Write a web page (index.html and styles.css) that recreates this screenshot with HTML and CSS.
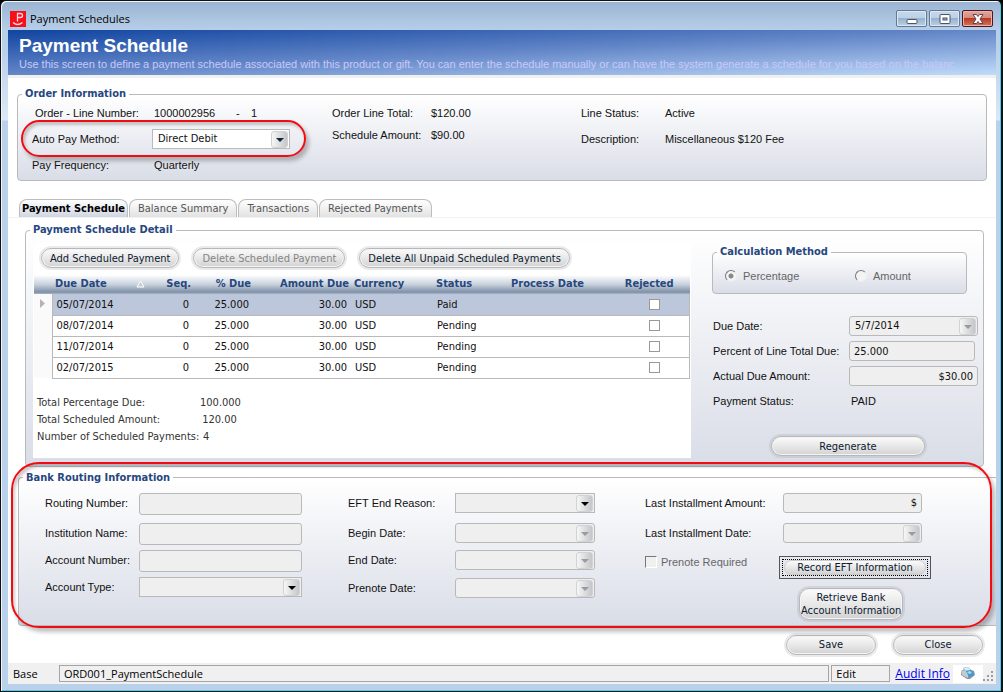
FILE: index.html
```html
<!DOCTYPE html>
<html lang="en">
<head>
<meta charset="utf-8">
<title>Payment Schedules</title>
<link rel="stylesheet" href="styles.css">
</head>
<body>
<div class="window">
  <div class="titlebar">
    <svg class="app-icon" width="16" height="16" viewBox="0 0 16 16" aria-hidden="true">
      <rect width="16" height="16" fill="#f5101c"/>
      <path d="M7.500 10.500V2.500H10.500Q12.500 2.500 12.500 4.500T10.500 6.500H7.500" fill="none" stroke="#ffd9d9" stroke-width="1.300"/>
      <path d="M3 11.500Q7.500 15.500 12.500 11.500" fill="none" stroke="#ffd9d9" stroke-width="1.300"/>
    </svg>
    <span class="caption">Payment Schedules</span>
    <div class="window-buttons">
      <button class="win-btn" aria-label="Minimize"><svg width="12" height="12" viewBox="0 0 12 12"><rect x="1" y="6.500" width="10" height="4" rx="1" fill="#fff" stroke="#4b5468"/></svg></button>
      <button class="win-btn" aria-label="Maximize"><svg width="12" height="12" viewBox="0 0 12 12"><rect x="1" y="1.500" width="10" height="9" rx="1" fill="#fff" stroke="#4b5468"/><rect x="4" y="5" width="4" height="2" fill="#9fb8d6" stroke="#4b5468"/></svg></button>
      <button class="win-btn win-close" aria-label="Close window"><svg width="12" height="12" viewBox="0 0 12 12"><path d="M1 1.500H4.500L6 3.500 7.500 1.500H11L8 6 11 10.500H7.500L6 8.500 4.500 10.500H1L4 6Z" fill="#fff" stroke="#5a4453" stroke-width="1"/></svg></button>
    </div>
  </div>

  <main class="client">
    <header class="banner">
      <h1>Payment Schedule</h1>
      <p>Use this screen to define a payment schedule associated with this product or gift. You can enter the schedule manually or can have the system generate a schedule for you based on the balanc</p>
    </header>

    <fieldset class="group order">
      <legend>Order Information</legend>
      <div class="order-grid">
        <div class="order-col col-a">
          <div class="pair first"><span>Order - Line Number:</span><span class="line-no"><span>1000002956</span><span>-</span><span>1</span></span></div>
          <div class="pair marked">
            <label for="autopay">Auto Pay Method:</label>
            <span class="combo live"><select id="autopay"><option>Direct Debit</option></select><i class="arrow"></i></span>
            <span class="marker marker-small"></span>
          </div>
          <div class="pair"><span>Pay Frequency:</span><span>Quarterly</span></div>
        </div>
        <div class="order-col col-b">
          <div class="pair"><span>Order Line Total:</span><span>$120.00</span></div>
          <div class="pair"><span>Schedule Amount:</span><span>$90.00</span></div>
        </div>
        <div class="order-col col-c">
          <div class="pair"><span>Line Status:</span><span>Active</span></div>
          <div class="pair"><span>Description:</span><span>Miscellaneous $120 Fee</span></div>
        </div>
      </div>
    </fieldset>

    <div class="tabs" role="tablist">
      <button class="tab active" role="tab" aria-selected="true">Payment Schedule</button>
      <button class="tab" role="tab">Balance Summary</button>
      <button class="tab" role="tab">Transactions</button>
      <button class="tab" role="tab">Rejected Payments</button>
    </div>

    <section class="tab-page">
      <fieldset class="group detail">
        <legend>Payment Schedule Detail</legend>
        <div class="detail-grid">
          <div class="schedule">
            <div class="actions">
              <button class="pill">Add Scheduled Payment</button>
              <button class="pill" disabled>Delete Scheduled Payment</button>
              <button class="pill">Delete All Unpaid Scheduled Payments</button>
            </div>
            <table class="rows">
              <colgroup><col class="c-sel"><col class="c-date"><col class="c-seq"><col class="c-pct"><col class="c-amt"><col class="c-cur"><col class="c-stat"><col class="c-proc"><col class="c-rej"></colgroup>
              <thead>
                <tr><th></th><th><span class="sorted">Due Date<svg width="9" height="8" viewBox="0 0 9 8" aria-hidden="true"><path d="M4.500 1L8 7H1Z" fill="#c6ccd4" stroke="#fff"/></svg></span></th><th class="num">Seq.</th><th class="num">% Due</th><th class="num">Amount Due</th><th>Currency</th><th>Status</th><th>Process Date</th><th class="mid">Rejected</th></tr>
              </thead>
              <tbody>
                <tr class="current"><td class="sel"><svg width="6" height="9" viewBox="0 0 6 9" aria-hidden="true"><path d="M0 0L5 4.500 0 9Z" fill="#b4b4b4"/></svg></td><td>05/07/2014</td><td class="num">0</td><td class="num">25.000</td><td class="num">30.00</td><td>USD</td><td>Paid</td><td></td><td class="mid"><input type="checkbox" class="tick" aria-label="Rejected 05/07/2014"></td></tr>
                <tr><td class="sel"></td><td>08/07/2014</td><td class="num">0</td><td class="num">25.000</td><td class="num">30.00</td><td>USD</td><td>Pending</td><td></td><td class="mid"><input type="checkbox" class="tick" aria-label="Rejected 08/07/2014"></td></tr>
                <tr><td class="sel"></td><td>11/07/2014</td><td class="num">0</td><td class="num">25.000</td><td class="num">30.00</td><td>USD</td><td>Pending</td><td></td><td class="mid"><input type="checkbox" class="tick" aria-label="Rejected 11/07/2014"></td></tr>
                <tr><td class="sel"></td><td>02/07/2015</td><td class="num">0</td><td class="num">25.000</td><td class="num">30.00</td><td>USD</td><td>Pending</td><td></td><td class="mid"><input type="checkbox" class="tick" aria-label="Rejected 02/07/2015"></td></tr>
              </tbody>
            </table>
            <div class="totals">
              <span>Total Percentage Due:</span><span class="sum">100.000</span>
              <span>Total Scheduled Amount:</span><span class="sum">120.00</span>
              <span>Number of Scheduled Payments:</span><span class="count">4</span>
            </div>
          </div>

          <div class="calc">
            <fieldset class="group method">
              <legend>Calculation Method</legend>
              <div class="radios">
                <label><input type="radio" name="method" class="radio" checked disabled>Percentage</label>
                <label><input type="radio" name="method" class="radio" disabled>Amount</label>
              </div>
            </fieldset>
            <div class="calc-form">
              <label for="due">Due Date:</label>
              <span class="combo"><select id="due" disabled><option>5/7/2014</option></select><i class="arrow"></i></span>
              <label for="pct">Percent of Line Total Due:</label>
              <input id="pct" class="box short" value="25.000" readonly>
              <label for="actual">Actual Due Amount:</label>
              <input id="actual" class="box right" value="$30.00" readonly>
              <span>Payment Status:</span>
              <span class="plain">PAID</span>
            </div>
            <button class="pill regenerate">Regenerate</button>
          </div>
        </div>
      </fieldset>

      <div class="bank-area">
        <fieldset class="group bank">
          <legend>Bank Routing Information</legend>
          <div class="bank-grid">
            <div class="form-col bank-a">
              <label for="routing">Routing Number:</label><input id="routing" class="box" readonly>
              <label for="inst">Institution Name:</label><input id="inst" class="box" readonly>
              <label for="acct">Account Number:</label><input id="acct" class="box" readonly>
              <label for="type">Account Type:</label><span class="combo square"><select id="type"></select><i class="arrow"></i></span>
            </div>
            <div class="form-col bank-b">
              <label for="reason">EFT End Reason:</label><span class="combo square"><select id="reason"></select><i class="arrow"></i></span>
              <label for="begin">Begin Date:</label><span class="combo"><select id="begin" disabled></select><i class="arrow"></i></span>
              <label for="end">End Date:</label><span class="combo"><select id="end" disabled></select><i class="arrow"></i></span>
              <label for="prenote">Prenote Date:</label><span class="combo"><select id="prenote" disabled></select><i class="arrow"></i></span>
            </div>
            <div class="form-col bank-c">
              <label for="lastamt">Last Installment Amount:</label><input id="lastamt" class="box right" value="$" readonly>
              <label for="lastdate">Last Installment Date:</label><span class="combo"><select id="lastdate" disabled></select><i class="arrow"></i></span>
              <label class="check"><input type="checkbox" class="sunken" disabled>Prenote Required</label>
              <span class="focus-frame"><button class="pill">Record EFT Information</button></span>
              <button class="pill tall">Retrieve Bank<br>Account Information</button>
            </div>
          </div>
        </fieldset>
        <span class="marker marker-large"></span>
      </div>
    </section>

    <div class="footer-actions">
      <button class="pill">Save</button>
      <button class="pill">Close</button>
    </div>

    <footer class="status">
      <span class="base">Base</span>
      <span class="cell grow">ORD001_PaymentSchedule</span>
      <span class="cell edit">Edit</span>
      <a href="#">Audit Info</a>
      <span class="printer"><svg width="16" height="14" viewBox="0 0 16 14" aria-hidden="true">
        <path d="M1 4L6 1 14 4 15 8 10 12 7 12 1 8Z" fill="#8b949c"/><path d="M1 4L5 3 8 7 8 11 2 8Z" fill="#c3cad0"/><path d="M3 1L8 0 11 3 6 4Z" fill="#d6eefa" stroke="#8fb4c8" stroke-width=".5"/><path d="M6 4L11 3 14 6 13 9 9 10Z" fill="#3f9bd8"/><path d="M7 5L10 4 12 6 9 7Z" fill="#a8d8f2"/>
      </svg></span>
      <svg class="grip" width="11" height="11" viewBox="0 0 11 11" aria-hidden="true"><path d="M8 0h2v2h-2zM4 4h2v2h-2zM8 4h2v2h-2zM0 8h2v2h-2zM4 8h2v2h-2zM8 8h2v2h-2z" fill="#9c9c9c"/></svg>
    </footer>
  </main>
</div>
</body>
</html>
```
FILE: styles.css
```css
* { box-sizing: border-box; }

body {
  margin: 0;
  background: #000;
  font: 11px/14px "Liberation Sans", Arial, sans-serif;
  color: #111;
}

button, input, select { font: inherit; color: inherit; margin: 0; }
fieldset { margin: 0; padding: 0; min-width: 0; }
h1, p { margin: 0; }

/* Window frame */
.window {
  display: flex;
  flex-direction: column;
  min-height: 100vh;
  padding: 0 5px 7px 6px;
  border: 1px solid #111;
  border-right: 2px solid #111;
  border-radius: 6px 6px 0 0;
  background: linear-gradient(#9ab4d2, #b6cee8 29px, #b9d1ea 50px, #dce8f5 119px, #b9d1ea 120px, #b9d1ea);
  box-shadow: inset 1px 1px 0 #eef5fc, inset -1px -1px 0 #3cd4f4;
}

.titlebar { display: flex; align-items: center; height: 29px; padding: 6px 3px 0; gap: 4px; }
.app-icon { flex: none; }
.caption { font: 11px/16px "Open Sans", "Noto Sans", sans-serif; color: #000; }
.window-buttons { display: flex; gap: 2px; margin-left: auto; }
.win-btn {
  display: flex;
  align-items: center;
  justify-content: center;
  width: 31px;
  height: 17px;
  padding: 0;
  border: 1px solid #66788f;
  border-radius: 2px;
  background: linear-gradient(#c6d8ec, #bcd0e6 50%, #98b2cd 50%, #b9d2e8);
  box-shadow: inset 0 0 0 1px #dbe8f5;
}
.win-close {
  border-color: #4f1620;
  background: linear-gradient(#e4a79e, #d6877a 50%, #b93a21 50%, #d6775a);
  box-shadow: inset 0 0 0 1px #e9b3aa;
}

.client { display: flex; flex-direction: column; flex: 1; margin-left: 1px; background: #fff; overflow: hidden; }

.banner {
  height: 48px;
  padding: 4px 10px 0 11px;
  border-bottom: 3px solid #f0f0f0;
  background: linear-gradient(to bottom right, #1044a0, #6487c8 50%, #c0dbfa);
  white-space: nowrap;
  overflow: hidden;
}
.banner h1 { font-size: 19px; line-height: 23px; color: #fff; }
.banner p { color: #c9c8fa; line-height: 14px; }

/* Group boxes */
.group {
  border: 1px solid #bababa;
  border-radius: 4px;
  background: linear-gradient(#fff, #d9dde7);
}
.group > legend, .rows th, .tab { font-family: "DejaVu Sans Condensed", "DejaVu Sans", sans-serif; }
.group > legend { margin-left: 4px; padding: 0 3px; font-weight: bold; line-height: 14px; color: #27477f; }

.order { margin: 9px 9px 0; padding-bottom: 2px; }
.order-grid { display: grid; grid-template-columns: 314px 249px 1fr; }
.pair { display: grid; align-items: center; height: 26px; }
.order-col { margin-top: -1px; }
.col-a .pair { grid-template-columns: 122px 1fr; padding-left: 14px; }
.col-a .first { grid-template-columns: 119px 1fr; padding-left: 17px; }
.col-b { padding-top: 2px; }
.col-b .pair { grid-template-columns: 99px 1fr; height: 22px; }
.col-c .pair { grid-template-columns: 84px 1fr; }
.line-no { display: grid; grid-template-columns: 82px 15px 1fr; }

.marked { position: relative; }
.marked .combo { width: 138px; margin-left: -2px; }
.marker { position: absolute; border: 2px solid #f20c12; pointer-events: none; box-shadow: 3px 4px 4px rgba(0, 0, 0, .25), inset 2px 3px 3px rgba(0, 0, 0, .2); }
.marker-small { left: 3px; top: -6px; width: 285px; height: 37px; border-radius: 19px; }
.marker-large { inset: -9px 4px -2px 3px; border-radius: 28px; }

/* Text boxes and drop-downs */
.box, .combo select {
  width: 100%;
  height: 20px;
  padding: 0 4px;
  border: 1px solid #b9b9b9;
  border-radius: 3px;
  background: #efefef;
  font-family: "DejaVu Sans Condensed", "DejaVu Sans", sans-serif;
  outline: 0;
}
.box.right { text-align: right; }
.combo { position: relative; display: block; }
.combo select { display: block; padding-left: 5px; appearance: none; opacity: 1; color: #111; }
.arrow {
  position: absolute;
  top: 2px;
  right: 2px;
  bottom: 1px;
  width: 17px;
  border: 1px solid #d2d2d2;
  border-radius: 3px;
  background: linear-gradient(90deg, #f6f6f6, #c4c6ca);
  pointer-events: none;
}
.arrow::after {
  content: "";
  position: absolute;
  top: 6px;
  left: 4px;
  border: 4px solid transparent;
  border-top-color: #000;
  border-bottom: 0;
}
.combo select:disabled + .arrow::after { border-top-color: #9b9b9b; }
.combo.live select { background: #fff; border-radius: 0; }
.live .arrow::after { border-top-color: #12263c; }
.combo.square select { border-radius: 0; }

/* Tabs */
.tabs { display: flex; gap: 1px; padding: 18px 11px 0; }
.tab {
  height: 18px;
  padding: 0 8px;
  border: 1px solid #bdbdbd;
  border-bottom: 0;
  border-radius: 8px 8px 0 0;
  background: linear-gradient(#fff, #e2e2e2);
  color: #555;
  line-height: 17px;
  white-space: nowrap;
}
.tab.active { padding: 0 2px; background: linear-gradient(#fff, #cfd6e2); color: #000; font-weight: bold; }

.tab-page { border-top: 1px solid #f2f2f2; }
.detail { margin: 5px 12px 0 17px; padding: 0 6px 8px 7px; }
.detail > legend { margin-left: -3px; }
.detail-grid { display: grid; grid-template-columns: 658px 1fr; padding-top: 6px; }

.schedule { background: #fff; padding: 5px 1px 14px; font-family: "DejaVu Sans Condensed", "DejaVu Sans", sans-serif; }
.actions { display: flex; gap: 14px; padding-left: 7px; }

.pill {
  min-height: 20px;
  padding: 0 8px;
  border: 1px solid #b8b8b8;
  border-radius: 10px;
  background: linear-gradient(#fbfbfb, #e8e8e8 50%, #d2d2d2);
  box-shadow: 0 0 0 2px rgba(120, 125, 135, .16), inset 0 0 0 1px #f4f4f4;
  color: #0c1930;
  font-family: "DejaVu Sans Condensed", "DejaVu Sans", sans-serif;
  line-height: 13px;
  white-space: nowrap;
}
.pill:disabled { color: #858585; }

/* Schedule table */
.rows { width: 100%; margin-top: 7px; table-layout: fixed; border-collapse: collapse; }
.c-sel { width: 18px; }
.c-date { width: 99px; }
.c-seq { width: 42px; }
.c-pct { width: 60px; }
.c-amt { width: 98px; }
.c-cur { width: 82px; }
.c-stat { width: 75px; }
.c-proc { width: 112px; }
.rows thead { background: linear-gradient(#fff, #c7d1dc 50%, #7e90a8 90%, #a9b6c8); }
.rows th { height: 19px; padding: 0 2px 0 3px; color: #27477f; text-align: left; white-space: nowrap; }
.rows td { height: 21px; padding: 0 4px; border: 1px solid #b9b9b9; border-width: 1px 0; color: #111; }
.rows tbody tr:first-child td { border-top-color: #bcc7db; }
.rows td:last-child { border-right-width: 1px; }
.rows td:nth-child(2) { border-left-width: 1px; }
.rows .num { text-align: right; }
.rows .mid { text-align: center; }
.rows th.mid { padding-right: 14px; }
.rows .current td { background: #bcc7db; }
.rows td.sel, .rows .current td.sel { padding: 0 0 0 6px; border-top: 0; border-bottom: 0; background: #fafafa; }
.sorted { display: flex; align-items: center; justify-content: space-between; padding-right: 4px; }
.tick { display: block; width: 11px; height: 11px; margin: 0 auto; appearance: none; border: 1px solid #999; background: #fff; }

.totals { display: grid; grid-template-columns: 163px 1fr; row-gap: 3px; padding: 17px 0 0 3px; color: #333; white-space: nowrap; }
.sum { width: 39px; text-align: center; }
.count { padding-left: 3px; }

/* Calculation panel */
.calc { display: flex; flex-direction: column; padding: 2px 0 0 21px; }
.method { width: 255px; }
.radios { display: grid; grid-template-columns: 130px 1fr; padding: 10px 0 10px 12px; }
.radios label, .check { display: flex; align-items: center; gap: 6px; color: #666; }
.radio { width: 12px; height: 12px; appearance: none; border: 1px solid; border-color: #777 #eee #eee #777; border-radius: 50%; background: #f4f4f4; }
.radio:checked { background: radial-gradient(circle, #888 2px, #f4f4f4 3px); }
.calc-form { display: grid; grid-template-columns: 136px 129px; row-gap: 5px; padding: 22px 0 0 1px; align-items: center; }
.calc-form label { white-space: nowrap; }
.calc-form .short { width: 126px; }
.plain { padding-left: 2px; line-height: 20px; }
.regenerate { width: 154px; margin: 25px 0 0 59px; }

/* Bank routing */
.bank-area { position: relative; margin-top: 4px; }
.bank { margin-left: 10px; padding-bottom: 3px; border-right: 0; border-radius: 4px 0 0 4px; }
.bank > legend { margin-left: 4px; }
.bank-grid { display: grid; grid-template-columns: 303px 297px 1fr; padding: 8px 0 0 26px; }
.form-col { display: grid; align-content: start; align-items: start; }
.form-col > label { line-height: 20px; white-space: nowrap; }
.bank-a { grid-template-columns: 94px 163px; grid-template-rows: 30px 27px 27px 22px; }
.bank-a .box { height: 22px; }
.bank-b { grid-template-columns: 107px 140px; grid-template-rows: 30px 27px 28px 22px; }
.bank-c { grid-template-columns: 138px 139px; grid-template-rows: 30px 33px 32px 34px; }
.form-col > .check { gap: 4px; line-height: 12px; }
.check .sunken { width: 12px; height: 12px; appearance: none; border: 1px solid; border-color: #777 #fff #fff #777; background: #f0f0f0; }
.focus-frame {
  width: 152px;
  margin-left: -4px;
  padding: 3px 4px;
  border: 1px solid #555;
  outline: 1px dotted #000;
  outline-offset: -4px;
  line-height: 0;
  background: linear-gradient(#e8eaf0, #dfe2ea);
}
.focus-frame .pill { width: 100%; height: 15px; min-height: 15px; padding: 0; border-color: #ccc; box-shadow: none; }
.pill.tall { grid-column: 2; width: 104px; height: 32px; margin-left: 16px; padding: 0 1px; }

.footer-actions { display: flex; justify-content: flex-end; gap: 17px; padding: 9px 13px 8px; }
.footer-actions .pill { width: 90px; }

/* Status bar */
.status { display: flex; align-items: center; height: 21px; margin-top: auto; padding: 0 2px 0 5px; background: #f0f0f0; font: 11px/16px "Open Sans", "Noto Sans", sans-serif; color: #000; }
.base { width: 46px; }
.cell { height: 17px; padding: 0 4px; border: 1px solid #a5a5a5; line-height: 15px; }
.grow { flex: 1; }
.edit { width: 59px; margin: 0 5px 0 2px; }
.status a { font-size: 12px; color: #00e; white-space: nowrap; }
.printer { display: flex; justify-content: center; align-items: center; width: 30px; height: 18px; margin-left: 3px; background: #fff; }
.grip { align-self: flex-end; margin-bottom: 2px; }
```
